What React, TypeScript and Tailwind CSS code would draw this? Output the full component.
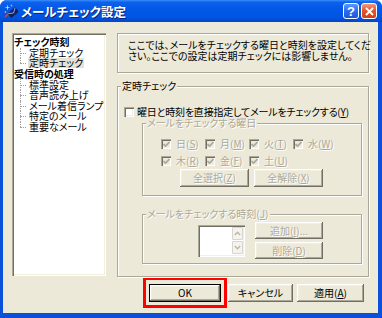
import React from "react";

const dis = "text-[#aca899] [text-shadow:1px_1px_0_#fff]";
const btn3d =
  "shadow-[inset_-1px_-1px_0_#716f64,inset_1px_1px_0_#fff,inset_-2px_-2px_0_#aca899,inset_2px_2px_0_#f1efe2] bg-[#ece9d8]";
const sunken =
  "shadow-[inset_1px_1px_0_#aca899,inset_2px_2px_0_#716f64,inset_-1px_-1px_0_#fff,inset_-2px_-2px_0_#f1efe2]";
const etched = "border border-[#aca899] shadow-[1px_1px_0_#fff,inset_1px_1px_0_#fff]";

function U({ c }: { c: string }) {
  return <span className="underline underline-offset-[1px]">{c}</span>;
}

function Check({ checked, disabled }: { checked?: boolean; disabled?: boolean }) {
  return (
    <span
      className={`relative inline-flex w-[10px] h-[10px] shrink-0 items-center justify-center ${sunken} ${
        disabled ? "bg-[#ece9d8]" : "bg-white"
      }`}
    >
      {checked && (
        <svg width="7" height="7" viewBox="0 0 7 7" className="block">
          <path d="M0.5 3 L2.5 5 L6.5 1" stroke={disabled ? "#aca899" : "#000"} strokeWidth="1.6" fill="none" />
        </svg>
      )}
    </span>
  );
}

function DayBox({ label, k }: { label: string; k: string }) {
  return (
    <div className="w-[44px] flex items-center h-[12px]">
      <Check checked disabled />
      <span className={`ml-[5px] ${dis} whitespace-nowrap`}>
        {label}(<U c={k} />)
      </span>
    </div>
  );
}

function Group({
  label,
  disabled,
  className,
  children,
}: {
  label: React.ReactNode;
  disabled?: boolean;
  className?: string;
  children: React.ReactNode;
}) {
  return (
    <div className={`relative ${etched} ${className ?? ""}`}>
      <span
        className={`absolute -top-[7px] left-[3px] px-[1px] bg-[#ece9d8] leading-[12px] whitespace-nowrap ${
          disabled ? dis : "text-black"
        }`}
      >
        {label}
      </span>
      {children}
    </div>
  );
}

function TitleIcon() {
  return (
    <svg width="14" height="14" viewBox="0 0 14 14" className="block">
      <g transform="rotate(-40 8.5 8.5)">
        <rect x="4" y="6" width="10" height="6" rx="1.2" fill="#14205a" />
        <path d="M4.6 6.6 L9 9.6 L13.4 6.6" stroke="#9fb6ff" strokeWidth="0.8" fill="none" />
      </g>
      <path d="M3.5 0.5 L4.1 2.9 L6.5 3.5 L4.1 4.1 L3.5 6.5 L2.9 4.1 L0.5 3.5 L2.9 2.9Z" fill="#ffd84a" />
      <circle cx="7.5" cy="1.5" r="0.9" fill="#ff9a2a" />
      <circle cx="1.5" cy="8" r="0.9" fill="#ff9a2a" />
      <path d="M1 13 L4 10" stroke="#e0401a" strokeWidth="1.6" />
    </svg>
  );
}

function TreeChild({ label, last, selected }: { label: string; last?: boolean; selected?: boolean }) {
  return (
    <div className="relative h-[10.6px] leading-[10px] flex items-center pl-[14px] whitespace-nowrap">
      <span
        className={`absolute left-[6px] top-0 w-0 border-l border-dotted border-[#a0a0a0] ${
          last ? "h-1/2" : "h-full"
        }`}
      />
      <span className="absolute left-[6px] top-1/2 w-[6px] h-0 border-t border-dotted border-[#a0a0a0]" />
      <span className={`px-[1px] leading-[10px] ${selected ? "bg-[#e4e2d6]" : ""}`}>{label}</span>
    </div>
  );
}

function TreeParent({ label }: { label: string }) {
  return <div className="h-[10.6px] leading-[10px] flex items-center font-bold whitespace-nowrap">{label}</div>;
}

export default function App() {
  return (
    <div
      className="w-[382px] h-[318px] flex flex-col bg-[#0b50d8] rounded-t-[7px] overflow-hidden text-[10px] leading-[12px] text-black font-['Noto_Sans_CJK_JP','Noto_Sans_CJK_SC',sans-serif] [font-feature-settings:'palt']"
    >
      {/* Title bar */}
      <div className="h-[22px] shrink-0 flex items-center pl-[4px] pr-[5px] bg-[linear-gradient(180deg,#3d8ef8_0%,#0b62ec_10%,#0358e6_40%,#0054e2_80%,#0244c8_100%)]">
        <TitleIcon />
        <span className="ml-[3px] text-white font-bold text-[12.5px] leading-[15px] [text-shadow:1px_1px_0_#0a237e]">
          メールチェック設定
        </span>
        <div className="ml-auto flex gap-[2px]">
          <div className="w-[16px] h-[16px] rounded-[3px] border border-white bg-[linear-gradient(180deg,#5a98ff_0%,#2a6cf0_50%,#1a56dc_100%)] flex items-center justify-center text-white font-bold text-[13px] leading-[13px] font-['Liberation_Sans',sans-serif]">
            ?
          </div>
          <div className="w-[16px] h-[16px] rounded-[3px] border border-white bg-[linear-gradient(180deg,#f39a7a_0%,#e2582e_45%,#cf3f14_100%)] flex items-center justify-center">
            <svg width="9" height="9" viewBox="0 0 9 9" className="block">
              <path d="M1 1 L8 8 M8 1 L1 8" stroke="#fff" strokeWidth="1.8" />
            </svg>
          </div>
        </div>
      </div>

      {/* Body */}
      <div className="flex-1 ml-[3px] mr-[4px] mb-[5px] bg-[#ece9d8] flex flex-col">
        <div className="flex pt-[11px] pl-[9px] h-[255px]">
          {/* Tree */}
          <div className={`w-[94px] h-[243px] bg-white ${sunken} pt-[4px] pl-[2px]`}>
            <TreeParent label="チェック時刻" />
            <TreeChild label="定期チェック" />
            <TreeChild label="定時チェック" last selected />
            <TreeParent label="受信時の処理" />
            <TreeChild label="標準設定" />
            <TreeChild label="音声読み上げ" />
            <TreeChild label="メール着信ランプ" />
            <TreeChild label="特定のメール" />
            <TreeChild label="重要なメール" last />
          </div>

          {/* Right column */}
          <div className="ml-[11px] w-[252px] flex flex-col">
            <div className={`h-[40px] ${etched} pl-[10px] pt-[5px] leading-[11px] whitespace-nowrap`}>
              ここでは、メールをチェックする曜日と時刻を設定してくだ
              <br />
              さい。ここでの設定は定期チェックには影響しません。
            </div>

            <Group label="定時チェック" className="mt-[13px] h-[191px] flex flex-col">
              <div className="mt-[19px] pl-[6px] h-[12px] flex items-center">
                <Check />
                <span className="ml-[3px] whitespace-nowrap tracking-[-0.2px]">
                  曜日と時刻を直接指定してメールをチェックする(<U c="Y" />)
                </span>
              </div>

              <Group
                label="メールをチェックする曜日"
                disabled
                className="mt-[5px] ml-[24px] mr-[6px] h-[73px] flex flex-col"
              >
                <div className="mt-[14px] pl-[18px] flex">
                  <DayBox label="日" k="S" />
                  <DayBox label="月" k="M" />
                  <DayBox label="火" k="T" />
                  <DayBox label="水" k="W" />
                </div>
                <div className="mt-[5px] pl-[18px] flex">
                  <DayBox label="木" k="R" />
                  <DayBox label="金" k="F" />
                  <DayBox label="土" k="U" />
                </div>
                <div className="mt-[2px] pl-[37px] flex gap-[5px]">
                  <div className={`w-[69px] h-[18px] ${btn3d} flex items-center justify-center ${dis}`}>
                    全選択(<U c="Z" />)
                  </div>
                  <div className={`w-[69px] h-[18px] ${btn3d} flex items-center justify-center ${dis}`}>
                    全解除(<U c="X" />)
                  </div>
                </div>
              </Group>

              <Group
                label={
                  <>
                    メールをチェックする時刻(<U c="J" />)
                  </>
                }
                disabled
                className="mt-[18px] ml-[24px] mr-[6px] h-[50px] flex items-start"
              >
                <div className={`mt-[10px] ml-[55px] w-[47px] h-[32px] bg-white ${sunken} flex justify-end p-[2px]`}>
                  <div className="w-[11px] flex flex-col gap-[1px]">
                    <div className="h-[13px] bg-[#f4f3ee] border border-[#d8d6cc] rounded-[1px] flex items-center justify-center">
                      <svg width="7" height="5" viewBox="0 0 7 5" className="block">
                        <path d="M0.8 4 L3.5 1.2 L6.2 4" stroke="#b8b5a8" strokeWidth="1.3" fill="none" />
                      </svg>
                    </div>
                    <div className="h-[13px] bg-[#f4f3ee] border border-[#d8d6cc] rounded-[1px] flex items-center justify-center">
                      <svg width="7" height="5" viewBox="0 0 7 5" className="block">
                        <path d="M0.8 1 L3.5 3.8 L6.2 1" stroke="#b8b5a8" strokeWidth="1.3" fill="none" />
                      </svg>
                    </div>
                  </div>
                </div>
                <div className="mt-[7px] ml-[10px] flex flex-col gap-[3px]">
                  <div className={`w-[68px] h-[17px] ${btn3d} flex items-center justify-center ${dis}`}>
                    追加(<U c="I" />)...
                  </div>
                  <div className={`w-[68px] h-[17px] ${btn3d} flex items-center justify-center ${dis}`}>
                    削除(<U c="D" />)
                  </div>
                </div>
              </Group>
            </Group>
          </div>
        </div>

        {/* Bottom buttons */}
        <div className="flex items-center pl-[140px]">
          <div className="w-[84px] h-[31px] border-[3px] border-[#ff0000] flex items-center justify-center">
            <div className="w-[72px] h-[18px] border border-black">
              <div className={`w-full h-full ${btn3d} flex items-center justify-center`}>OK</div>
            </div>
          </div>
          <div className={`ml-[1px] w-[65px] h-[18px] ${btn3d} flex items-center justify-center`}>キャンセル</div>
          <div className={`ml-[4px] w-[67px] h-[18px] ${btn3d} flex items-center justify-center`}>
            適用(<U c="A" />)
          </div>
        </div>
      </div>
    </div>
  );
}
